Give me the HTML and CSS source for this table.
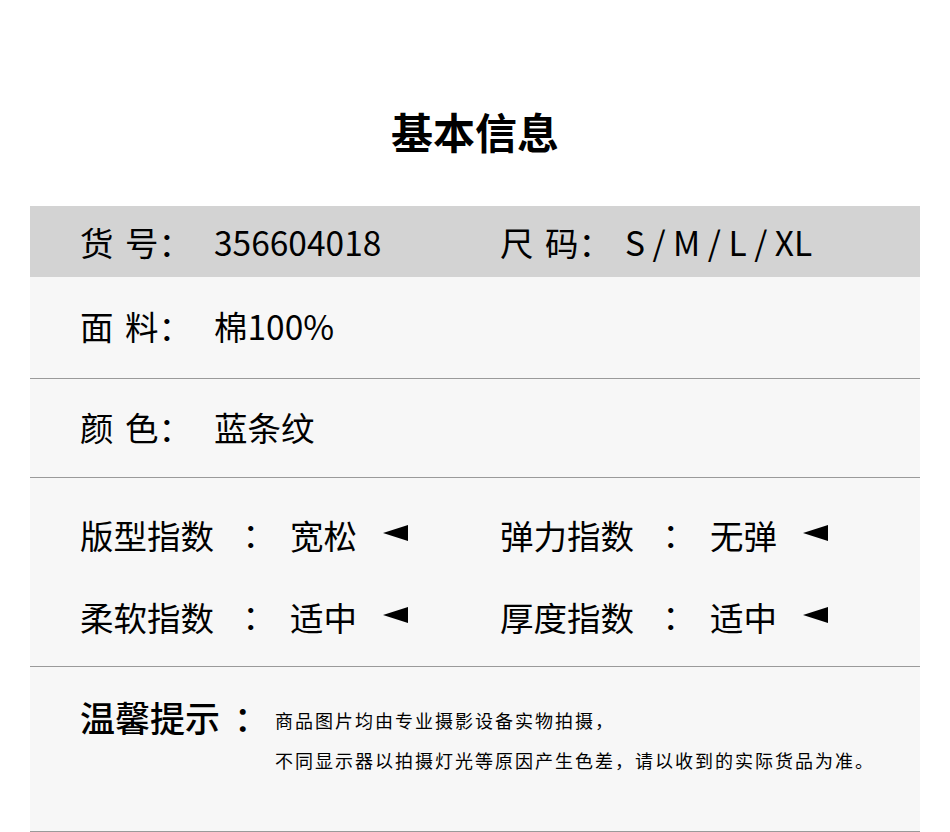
FILE: index.html
```html
<!DOCTYPE html>
<html lang="zh">
<head>
<meta charset="utf-8">
<title>基本信息</title>
<link rel="stylesheet" href="styles.css">
</head>
<body>
<div class="page">
  <h1 class="title">基本信息</h1>
  <div class="table">
    <div class="row row-head">
      <div class="cell">
        <span class="label label-id">货 号<span class="colon">：</span></span>
        <span class="value">356604018</span>
      </div>
      <div class="cell">
        <span class="label label-size">尺 码<span class="colon">：</span></span>
        <span class="value">S / M / L / XL</span>
      </div>
    </div>
    <div class="row row-fabric">
      <div class="cell">
        <span class="label label-id">面 料<span class="colon">：</span></span>
        <span class="value">棉100%</span>
      </div>
    </div>
    <div class="row row-color">
      <div class="cell">
        <span class="label label-id">颜 色<span class="colon">：</span></span>
        <span class="value">蓝条纹</span>
      </div>
    </div>
    <div class="row row-index">
      <div class="index">
        <span class="idx-label">版型指数</span>
        <span class="idx-colon colon">：</span>
        <span class="idx-value">宽松</span>
        <span class="arrow"></span>
      </div>
      <div class="index">
        <span class="idx-label">弹力指数</span>
        <span class="idx-colon colon">：</span>
        <span class="idx-value">无弹</span>
        <span class="arrow"></span>
      </div>
      <div class="index">
        <span class="idx-label">柔软指数</span>
        <span class="idx-colon colon">：</span>
        <span class="idx-value">适中</span>
        <span class="arrow"></span>
      </div>
      <div class="index">
        <span class="idx-label">厚度指数</span>
        <span class="idx-colon colon">：</span>
        <span class="idx-value">适中</span>
        <span class="arrow"></span>
      </div>
    </div>
    <div class="row row-tips">
      <div class="tips-label">温馨提示<span class="tips-colon">：</span></div>
      <div class="tips-text">
        <p>商品图片均由专业摄影设备实物拍摄，</p>
        <p>不同显示器以拍摄灯光等原因产生色差，请以收到的实际货品为准。</p>
      </div>
    </div>
  </div>
</div>
</body>
</html>
```

FILE: styles.css
```css
* {
  box-sizing: border-box;
}

html, body {
  margin: 0;
  padding: 0;
  background: #ffffff;
}

body {
  font-family: "Noto Sans CJK SC", "Noto Sans", sans-serif;
  color: #000;
}

.page {
  width: 950px;
}

.title {
  margin: 0;
  height: 206px;
  padding-top: 108px;
  font-size: 42px;
  line-height: 46px;
  font-weight: 700;
  text-align: center;
}

.table {
  margin-left: 30px;
  width: 890px;
  background: #f7f7f7;
}

.row {
  display: grid;
  grid-template-columns: 420px 1fr;
  padding-left: 50px;
  font-size: 33.5px;
  border-bottom: 1px solid #9a9a9a;
}

.colon {
  font-family: "Noto Sans CJK TC", "Noto Sans CJK SC", sans-serif;
}

.cell {
  display: flex;
  align-items: center;
  white-space: pre;
}

.label {
  display: inline-block;
  word-spacing: 4px;
}

.label-id {
  width: 134px;
}

.label-size {
  width: 125px;
}

.row-head {
  height: 71px;
  background: #d3d3d3;
  border-bottom: none;
  padding-bottom: 1px;
}

.row-fabric {
  height: 102px;
  padding-bottom: 4px;
}

.row-color {
  height: 99px;
  padding-bottom: 4px;
}

.row-index {
  height: 189px;
  padding-top: 15px;
  grid-auto-rows: 82px;
}

.index {
  display: flex;
  align-items: center;
  white-space: nowrap;
}

.idx-label {
  width: 154px;
}

.idx-colon {
  width: 56px;
}

.idx-value {
  width: 93px;
}

.arrow {
  width: 0;
  height: 0;
  border-right: 25px solid #000;
  border-top: 8px solid transparent;
  border-bottom: 8px solid transparent;
  margin-top: -2px;
}

.row-tips {
  display: flex;
  align-items: flex-start;
  height: 165px;
  padding-top: 30px;
}

.tips-label {
  width: 195px;
  font-size: 35px;
  font-weight: 500;
  line-height: 40px;
  white-space: nowrap;
}

.tips-colon {
  margin-left: 14px;
}

.tips-text {
  margin-top: 3px;
  font-size: 18px;
  line-height: 40px;
  letter-spacing: 2px;
}

.tips-text p {
  margin: 0;
  white-space: nowrap;
}
```
